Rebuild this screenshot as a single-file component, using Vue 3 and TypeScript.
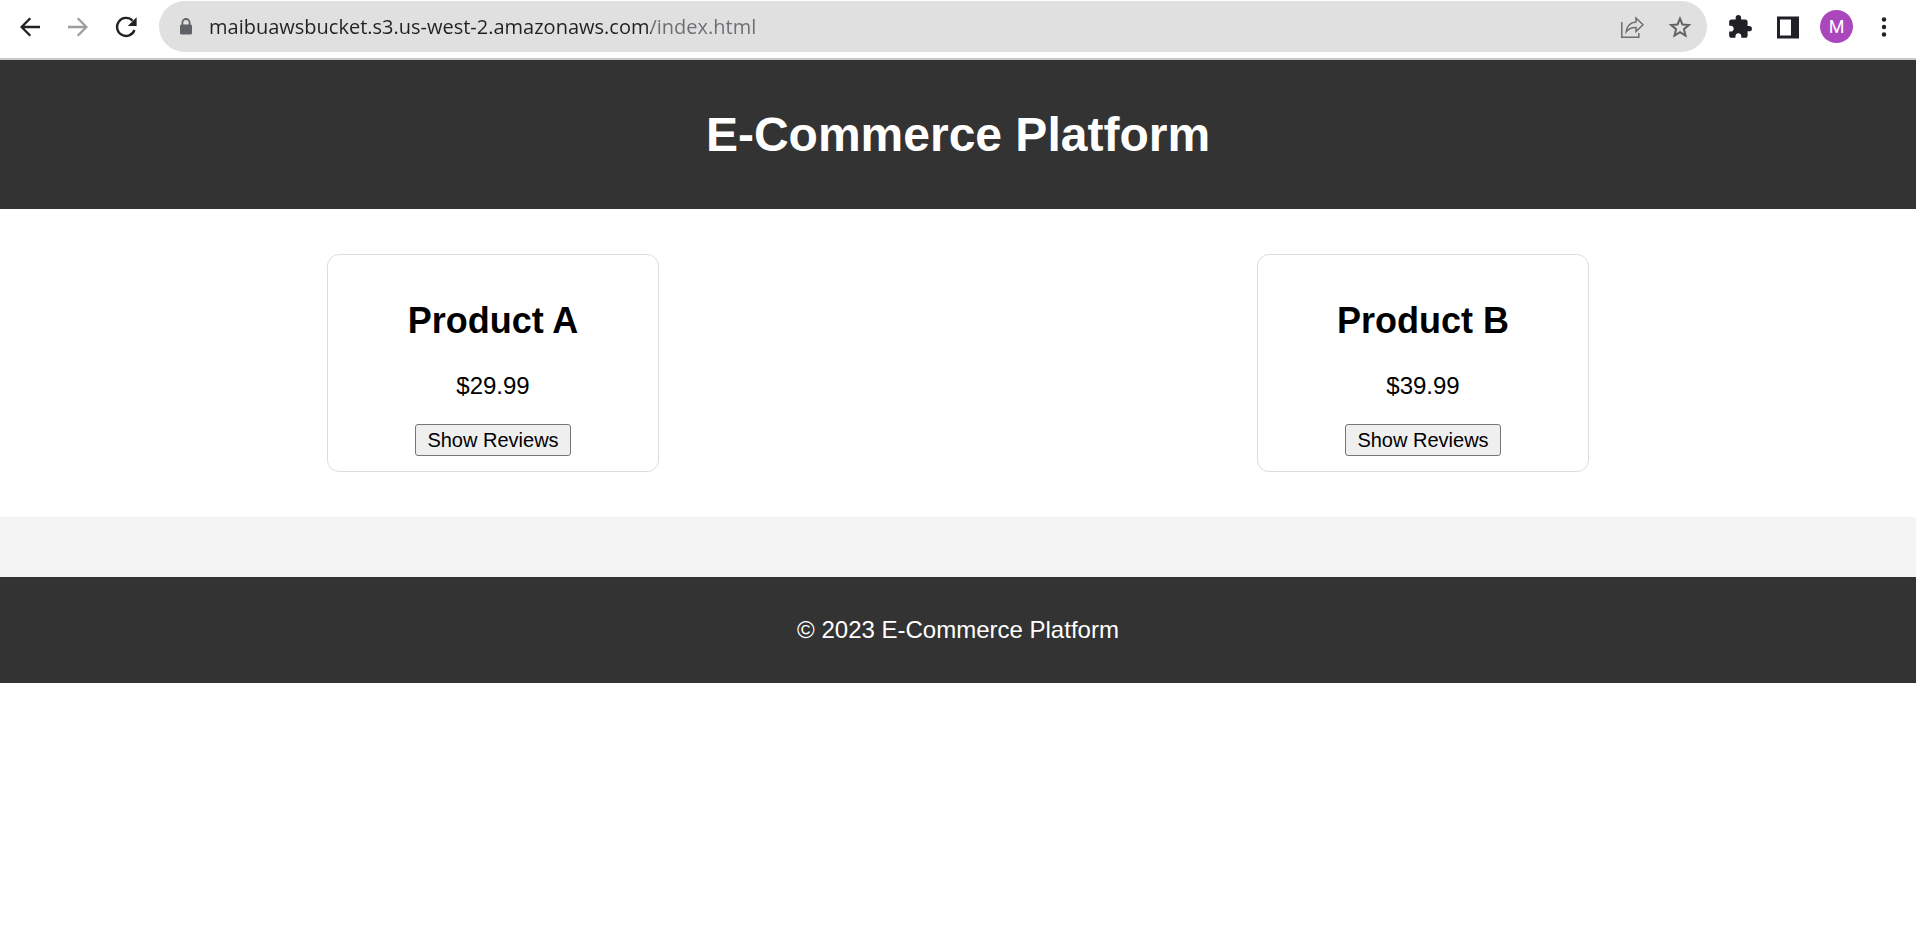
<script setup lang="ts">
import { ref } from 'vue'

interface Product {
  id: number
  name: string
  price: string
}

const address = ref('maibuawsbucket.s3.us-west-2.amazonaws.com/index.html')

const products: Product[] = [
  { id: 1, name: 'Product A', price: '$29.99' },
  { id: 2, name: 'Product B', price: '$39.99' },
]
</script>

<template>
  <div class="browser">
    <nav class="toolbar" aria-label="Browser toolbar">
      <div class="nav-buttons">
        <button class="icon-button" type="button" aria-label="Back">
          <svg viewBox="0 0 24 24" width="24" height="24" fill="none" stroke="#202124" stroke-width="2.3">
            <path d="M22 12H4M12.3 3.2L3.6 12l8.7 8.8" />
          </svg>
        </button>
        <button class="icon-button" type="button" aria-label="Forward">
          <svg viewBox="0 0 24 24" width="24" height="24" fill="none" stroke="#9d9ea0" stroke-width="2.3">
            <path d="M2 12h18M11.7 3.2l8.7 8.8-8.7 8.8" />
          </svg>
        </button>
        <button class="icon-button" type="button" aria-label="Reload">
          <svg viewBox="0 0 24 24" width="24" height="24">
            <path d="M20.5 15A9 9 0 1 1 18.6 5.8" fill="none" stroke="#202124" stroke-width="2.3" />
            <path d="M22.6 2.2V11h-8.8z" fill="#202124" />
          </svg>
        </button>
      </div>

      <div class="address-bar">
        <svg class="lock" viewBox="0 0 14 18" width="14" height="18">
          <path d="M3.4 8V4.6a3.6 3.6 0 0 1 7.2 0V8" fill="none" stroke="#5f6368" stroke-width="1.8" />
          <rect x="1" y="6.6" width="12" height="10" rx="1.5" fill="#5f6368" />
        </svg>
        <input v-model="address" class="address" type="text" aria-label="Address" spellcheck="false" />
        <button class="icon-button" type="button" aria-label="Share">
          <svg viewBox="0 0 24 24" width="24" height="24" fill="none" stroke="#6a6d71" stroke-width="1.5">
            <path d="M1.8 7v15.2h17V18" />
            <path d="M16 3l7 6.8-7 6.8v-4.1c-4.3-.2-7.3 1-9.8 4.2C6.8 11.2 10 7.6 16 7z" />
          </svg>
        </button>
        <button class="icon-button" type="button" aria-label="Bookmark">
          <svg viewBox="0 0 24 24" width="24" height="24" fill="none" stroke="#606367" stroke-width="2">
            <path d="M12 3.6l2.45 5.9 6.45.5-4.95 4.2 1.55 6.3L12 17.1l-5.5 3.4 1.55-6.3L3.1 10l6.45-.5z" />
          </svg>
        </button>
      </div>

      <div class="actions">
        <button class="icon-button" type="button" aria-label="Extensions">
          <svg viewBox="0 0 24 24" width="26" height="26" fill="#202124">
            <path d="M20.5 11H19V7c0-1.1-.9-2-2-2h-4V3.5a2.5 2.5 0 0 0-5 0V5H4c-1.1 0-1.99.9-1.99 2v3.8H3.5c1.49 0 2.7 1.21 2.7 2.7s-1.21 2.7-2.7 2.7H2V20c0 1.1.9 2 2 2h3.8v-1.5c0-1.49 1.21-2.7 2.7-2.7s2.7 1.21 2.7 2.7V22H17c1.1 0 2-.9 2-2v-4h1.5a2.5 2.5 0 0 0 0-5z" />
          </svg>
        </button>
        <button class="icon-button" type="button" aria-label="Side panel">
          <svg viewBox="0 0 24 24" width="24" height="24">
            <path fill="#202124" fill-rule="evenodd" d="M1 1.5h22v22H1zM4 4.5v16h11v-16z" />
          </svg>
        </button>
        <button class="avatar" type="button" aria-label="Profile M">M</button>
        <button class="icon-button" type="button" aria-label="Menu">
          <svg viewBox="0 0 24 24" width="24" height="24" fill="#202124">
            <circle cx="12" cy="4.5" r="2.2" />
            <circle cx="12" cy="12" r="2.2" />
            <circle cx="12" cy="19.5" r="2.2" />
          </svg>
        </button>
      </div>
    </nav>

    <div class="page">
      <header class="banner">
        <h1>E-Commerce Platform</h1>
      </header>
      <main>
        <section class="products">
          <article v-for="product in products" :key="product.id" class="card">
            <h2>{{ product.name }}</h2>
            <p>{{ product.price }}</p>
            <button class="reviews-button" type="button">Show Reviews</button>
          </article>
        </section>
        <section class="reviews" aria-label="Reviews"></section>
      </main>
      <footer class="footer">
        <p>© 2023 E-Commerce Platform</p>
      </footer>
    </div>
  </div>
</template>

<style>
body {
  margin: 0;
  background: #fff;
}
</style>

<style scoped>
.browser {
  font-family: "Liberation Sans", Arial, sans-serif;
  color: #000;
}

.toolbar {
  box-sizing: border-box;
  display: flex;
  align-items: flex-start;
  height: 60px;
  padding: 1px 20px 0 18px;
  border-bottom: 2px solid #c8c8c8;
}

.nav-buttons,
.actions {
  display: flex;
  align-items: center;
  height: 51px;
  gap: 24px;
}

.icon-button {
  display: flex;
  align-items: center;
  justify-content: center;
  flex: none;
  width: 24px;
  height: 24px;
  padding: 0;
  border: 0;
  background: none;
}

.icon-button svg {
  flex: none;
}

.address-bar {
  box-sizing: border-box;
  display: flex;
  flex: 1;
  align-items: center;
  min-width: 0;
  height: 51px;
  gap: 24px;
  margin: 0 21px;
  padding: 0 15px 0 20px;
  border-radius: 26px;
  background: #e0e0e0;
}

.lock {
  flex: none;
}

.address {
  flex: 1;
  min-width: 0;
  height: 32px;
  margin-left: -8px;
  padding: 0;
  border: 0;
  outline: 0;
  background: linear-gradient(to right, #202124 442px, #6a6d71 442px);
  background-clip: text;
  color: transparent;
  font: 20px "Open Sans", "Noto Sans", sans-serif;
}

.avatar {
  flex: none;
  width: 33px;
  height: 33px;
  margin: 0 -5px 0 -4px;
  padding: 0;
  border: 0;
  border-radius: 50%;
  background: #ab47bc;
  color: #fff;
  font: 18px Roboto, sans-serif;
}

.banner {
  padding: 15px;
  background: #333;
  color: #fff;
  text-align: center;
}

.banner h1 {
  margin: 32px 0;
  font-size: 48px;
  line-height: 55px;
}

.products {
  display: flex;
  justify-content: space-around;
  padding: 30px 28px;
}

.card {
  box-sizing: border-box;
  width: 332px;
  margin: 15px;
  padding: 15px;
  border: 1px solid #ddd;
  border-radius: 12px;
  text-align: center;
}

.card h2 {
  margin: 30px 0;
  font-size: 36px;
  line-height: 42px;
}

.card p {
  margin: 24px 0;
  font-size: 24px;
  line-height: 28px;
}

.reviews-button {
  display: block;
  height: 32px;
  margin: 0 auto;
  padding: 0 11px;
  border: 1px solid #767676;
  border-radius: 3px;
  background: #efefef;
  color: #000;
  font: 20px "Liberation Sans", Arial, sans-serif;
}

.reviews {
  padding: 30px;
  background: #f4f4f4;
}

.footer {
  padding: 15px;
  background: #333;
  color: #fff;
  text-align: center;
}

.footer p {
  margin: 24px 0;
  font-size: 24px;
  line-height: 28px;
}
</style>
